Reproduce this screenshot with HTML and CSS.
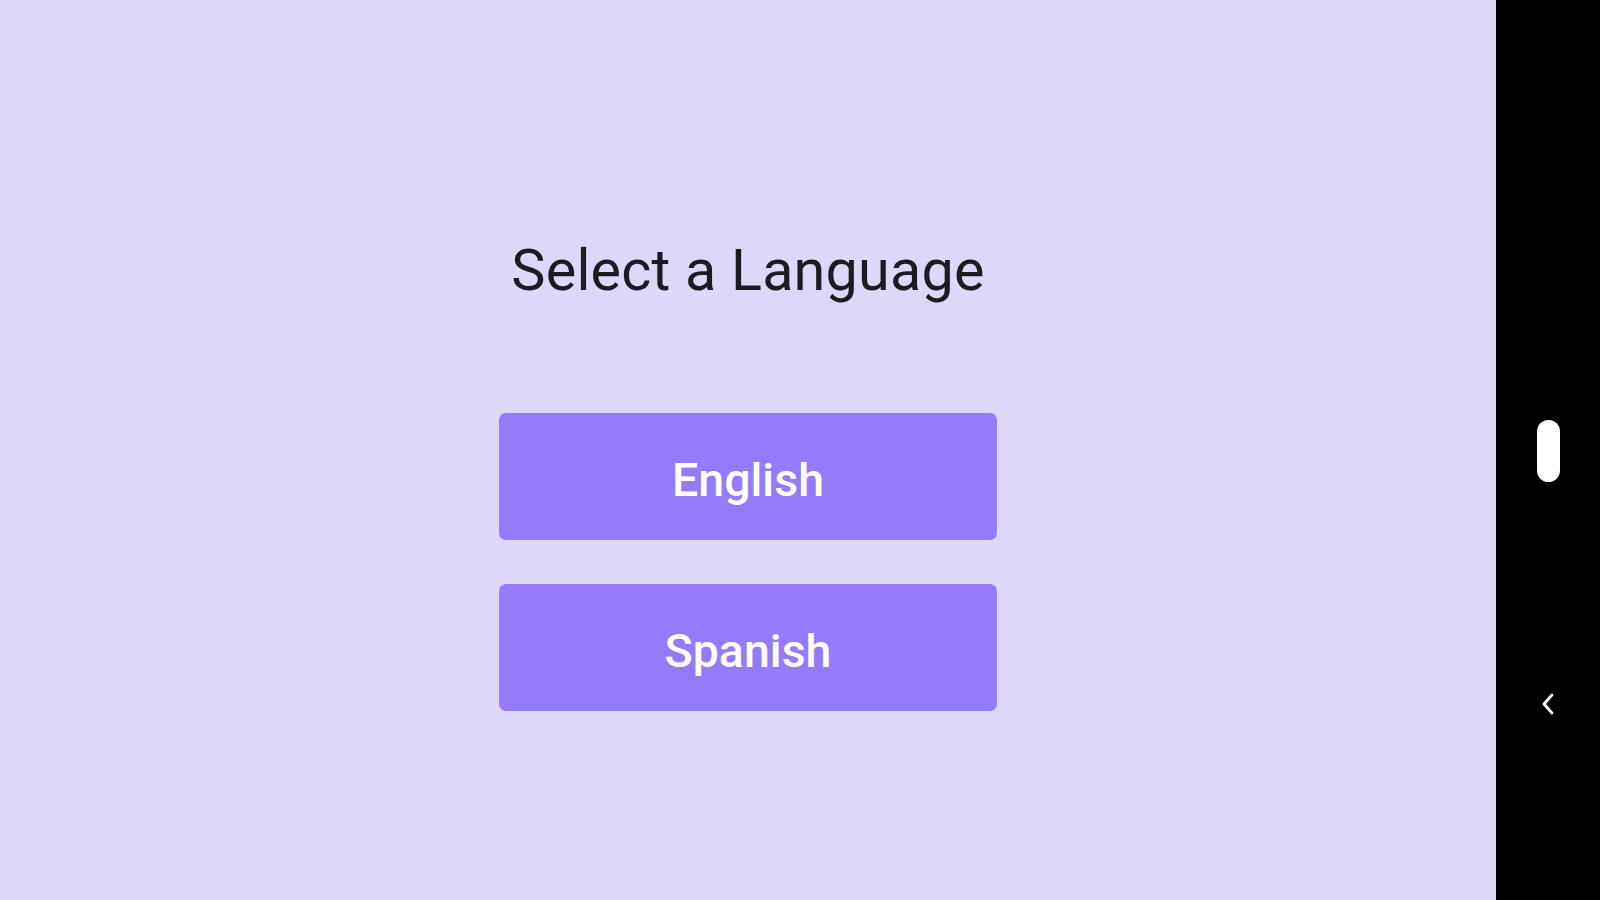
FILE: index.html
```html
<!DOCTYPE html>
<html lang="en">
<head>
<meta charset="utf-8">
<title>Select a Language</title>
<link rel="stylesheet" href="styles.css">
</head>
<body>
<div class="screen">
  <main class="content">
    <h1 class="title">Select a Language</h1>
    <div class="buttons">
      <button class="lang-btn">English</button>
      <button class="lang-btn">Spanish</button>
    </div>
  </main>
  <aside class="navbar">
    <div class="handle"></div>
    <svg class="back" width="16" height="24" viewBox="0 0 16 24" aria-hidden="true">
      <path d="M12 3 L4 12 L12 21" fill="none" stroke="#fff" stroke-width="2.8" stroke-linecap="round" stroke-linejoin="round"/>
    </svg>
  </aside>
</div>
</body>
</html>
```
FILE: styles.css
```css
html, body {
  margin: 0;
  padding: 0;
  width: 1600px;
  height: 900px;
  overflow: hidden;
}

body {
  font-family: Roboto, "Noto Sans", sans-serif;
}

.screen {
  display: flex;
  width: 1600px;
  height: 900px;
}

.content {
  flex: 0 0 1496px;
  background: #ded8f8;
  display: flex;
  flex-direction: column;
  align-items: center;
  padding-top: 238px;
  box-sizing: border-box;
}

.title {
  margin: 0;
  font-size: 57.5px;
  line-height: 66px;
  font-weight: 400;
  color: #1d1b22;
  letter-spacing: 0.2px;
}

.buttons {
  margin-top: 109px;
  display: flex;
  flex-direction: column;
  gap: 44px;
}

.lang-btn {
  width: 498px;
  height: 127px;
  border: none;
  border-radius: 7px;
  background: #957afa;
  color: #ffffff;
  font-family: Roboto, "Noto Sans", sans-serif;
  font-size: 46.5px;
  font-weight: 500;
  display: flex;
  align-items: center;
  justify-content: center;
  padding: 6px 0 0;
  box-sizing: border-box;
}

.navbar {
  flex: 1;
  background: #000;
  display: flex;
  flex-direction: column;
  align-items: center;
  padding-top: 420px;
}

.handle {
  width: 23px;
  height: 62px;
  border-radius: 12px;
  background: #fff;
}

.back {
  margin-top: 210px;
}
```
